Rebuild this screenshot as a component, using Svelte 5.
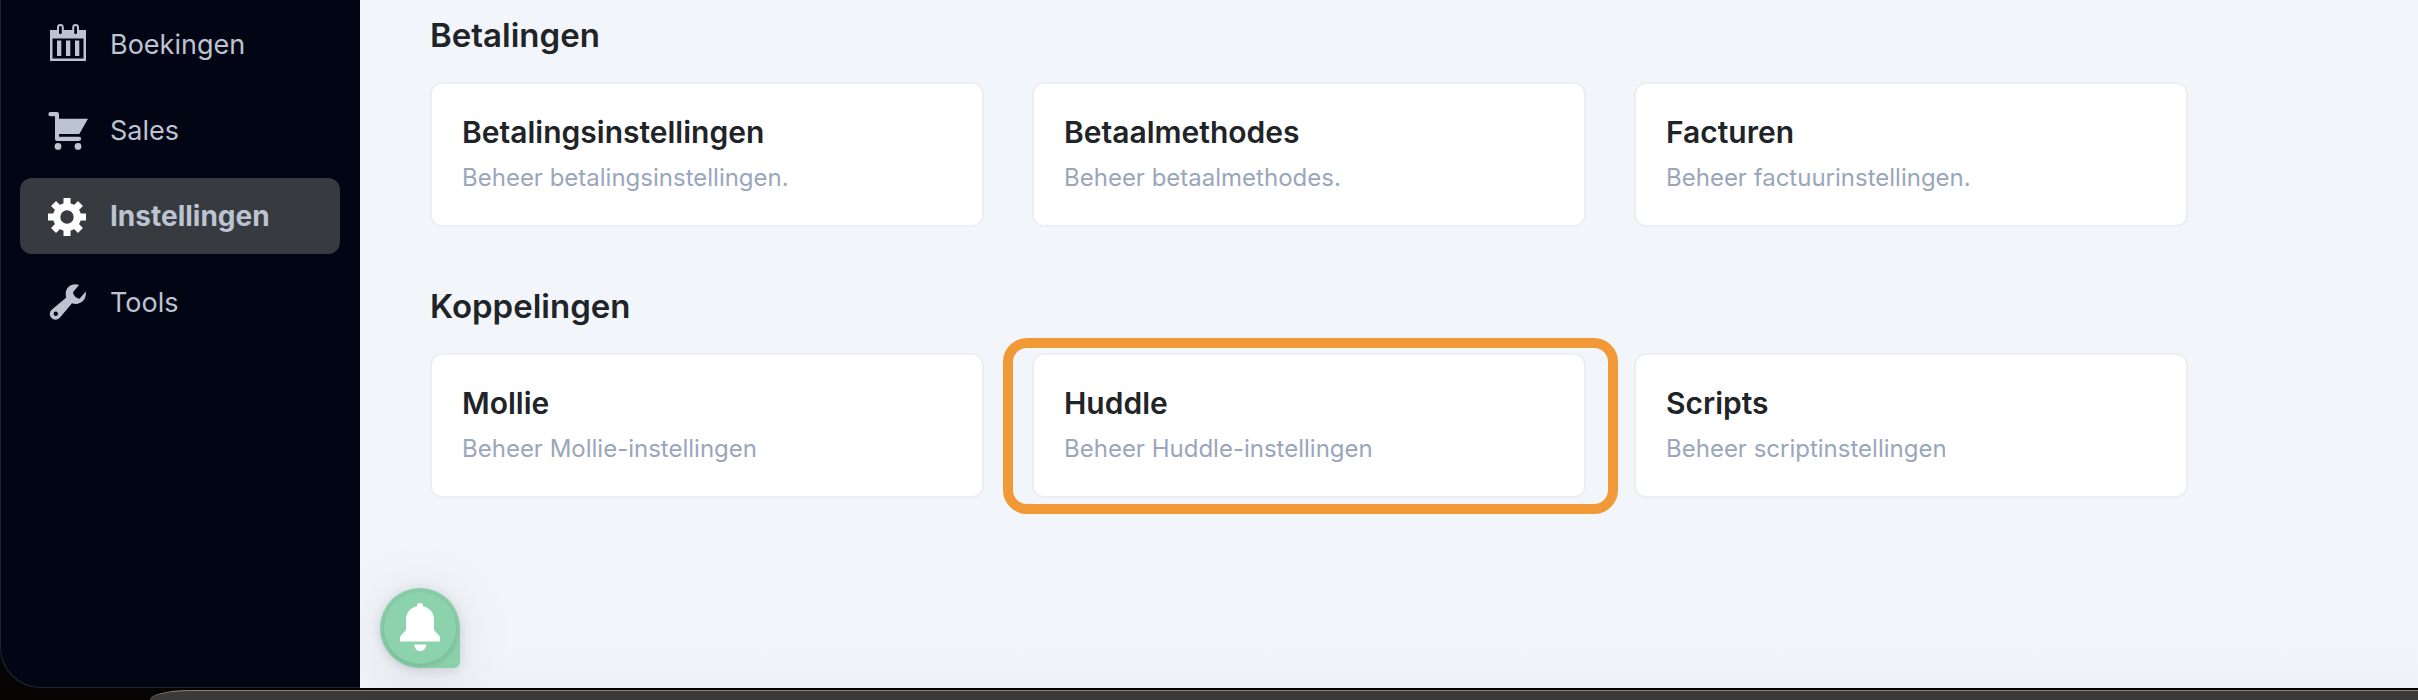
<script lang="ts">
  const nav = [
    { label: 'Boekingen', icon: 'calendar', active: false },
    { label: 'Sales', icon: 'cart', active: false },
    { label: 'Instellingen', icon: 'gear', active: true },
    { label: 'Tools', icon: 'wrench', active: false }
  ];

  const sections = [
    {
      title: 'Betalingen',
      cards: [
        { title: 'Betalingsinstellingen', text: 'Beheer betalingsinstellingen.', marked: false },
        { title: 'Betaalmethodes', text: 'Beheer betaalmethodes.', marked: false },
        { title: 'Facturen', text: 'Beheer factuurinstellingen.', marked: false }
      ]
    },
    {
      title: 'Koppelingen',
      cards: [
        { title: 'Mollie', text: 'Beheer Mollie-instellingen', marked: false },
        { title: 'Huddle', text: 'Beheer Huddle-instellingen', marked: true },
        { title: 'Scripts', text: 'Beheer scriptinstellingen', marked: false }
      ]
    }
  ];

  const teeth = [0, 45, 90, 135, 180, 225, 270, 315];
</script>

<div class="desktop">
  <div class="window">
    <nav class="sidebar" aria-label="Hoofdmenu">
      {#each nav as item}
        <a class="nav-item" class:active={item.active} href="#{item.label.toLowerCase()}">
          <svg class="nav-icon" viewBox="0 0 40 40" aria-hidden="true">
            {#if item.icon === 'calendar'}
              <path
                fill-rule="evenodd"
                d="M2 6h7V3.400a3.400 3.400 0 0 1 6.800 0V6h8.400V3.400a3.400 3.400 0 0 1 6.800 0V6h7v31H2zM4.500 14.500v20h31v-20zM11 3.500v5.300a1.400 1.400 0 0 0 2.800 0V3.500a1.400 1.400 0 0 0-2.800 0zM26.200 3.500v5.300a1.400 1.400 0 0 0 2.800 0V3.500a1.400 1.400 0 0 0-2.800 0z"
              />
              <path d="M9 16.500h4.300v15.500H9zM18 16.500h4.300v15.500H18zM27 16.500h4.300v15.500H27z" />
            {:else if item.icon === 'cart'}
              <path
                d="M2.500 2H9a2 2 0 0 1 2 2v4.700h29L31.300 24H11v2.700h20a2.100 2.100 0 0 1 0 4.300H9a2 2 0 0 1-2-2V6.300H2.500a2.100 2.100 0 0 1 0-4.300z"
              />
              <circle cx="10" cy="36.400" r="3.400" />
              <circle cx="30" cy="36.400" r="3.400" />
            {:else if item.icon === 'gear'}
              {#each teeth as angle}
                <rect x="15.500" y="2" width="7" height="9" transform="rotate({angle} 19 21)" />
              {/each}
              <path
                fill-rule="evenodd"
                d="M19 7a14 14 0 0 1 0 28a14 14 0 0 1 0-28zM19 14.300a6.700 6.700 0 0 0 0 13.400a6.700 6.700 0 0 0 0-13.400z"
              />
            {:else}
              <path
                fill-rule="evenodd"
                d="M31 3C24 .5 17.500 5.500 17.700 12c0 1.500.3 2.500.6 3.600L4 27.500a5.700 5.700 0 1 0 8 8L24 21.300c7.500 2.700 15-3 13.800-11.800l-6.300 7.300c-3-.4-6-2.800-6.500-6.500zM7.800 29.500a2.200 2.200 0 1 1 0 4.400a2.200 2.200 0 0 1 0-4.400z"
              />
            {/if}
          </svg>
          <span>{item.label}</span>
        </a>
      {/each}
    </nav>

    <main class="content">
      {#each sections as section}
        <section>
          <h2>{section.title}</h2>
          <div class="cards">
            {#each section.cards as card}
              <a class="card" class:marked={card.marked} href="#{card.title.toLowerCase()}">
                <h3>{card.title}</h3>
                <p>{card.text}</p>
              </a>
            {/each}
          </div>
        </section>
      {/each}

      <button class="bell" type="button" aria-label="Meldingen">
        <span class="bell-face">
          <svg viewBox="0 0 40 50" aria-hidden="true">
            <path
              d="M20 0a3 3 0 0 1 3 3.200C29.500 4.500 34 9.500 34 16.500v10.500l5 5.500a4 4 0 0 1 1 2.700V38.500H0v-3.300A4 4 0 0 1 1 32.500l5-5.500V16.500C6 9.500 10.500 4.500 17 3.200A3 3 0 0 1 20 0z"
            />
            <path d="M14 41.500h12.500a6.300 7.500 0 0 1-12.500 0z" />
          </svg>
        </span>
      </button>
    </main>
  </div>

  <!-- window lying behind, only its top edge shows -->
  <div class="behind"></div>
</div>

<style>
  :global(body) {
    background: #050403;
    font-family: Inter, 'Open Sans', sans-serif;
  }

  .desktop {
    display: flex;
    flex-direction: column;
    min-height: 100vh;
    overflow: hidden;
  }

  .window {
    flex: 1;
    display: flex;
  }

  .sidebar {
    position: relative;
    z-index: 1;
    box-sizing: border-box;
    width: 360px;
    flex-shrink: 0;
    display: flex;
    flex-direction: column;
    gap: 10px;
    padding: 6px 20px;
    background: #020514;
    border-bottom-left-radius: 40px;
    box-shadow: inset 1px -1px 0 #20222e;
  }

  .nav-item {
    display: flex;
    align-items: center;
    gap: 22px;
    height: 76px;
    padding-left: 28px;
    border-radius: 12px;
    color: #bcc3d1;
    font-size: 27px;
    text-decoration: none;
  }

  .nav-item.active {
    background: #373b3f;
    font-size: 28px;
    font-weight: 700;
  }

  .nav-icon {
    width: 40px;
    height: 40px;
    fill: #bcc3d1;
  }

  .active .nav-icon {
    fill: #fff;
  }

  .content {
    position: relative;
    flex: 1;
    padding: 11px 70px;
    background: linear-gradient(to top, #eef1f6, #f2f5fa 40px);
  }

  section {
    max-width: 1758px;
    margin-bottom: 55px;
  }

  h2 {
    margin: 0 0 23px;
    color: #1f2428;
    font-size: 33px;
    font-weight: 600;
    line-height: 48px;
  }

  .cards {
    display: grid;
    grid-template-columns: repeat(3, 1fr);
    gap: 48px;
  }

  .card {
    position: relative;
    box-sizing: border-box;
    padding: 28px 30px;
    background: #fff;
    border: 2px solid #eceef2;
    border-radius: 12px;
    color: #1f2428;
    text-decoration: none;
  }

  .marked::after {
    content: '';
    position: absolute;
    inset: -17px -34px -18px -31px;
    border: 10px solid #f09936;
    border-radius: 24px;
  }

  h3 {
    margin: 0 0 6px;
    font-size: 30px;
    font-weight: 600;
    line-height: 40px;
  }

  p {
    margin: 0;
    color: #9aa6bb;
    font-size: 24px;
    line-height: 39px;
  }

  .bell {
    position: absolute;
    left: 20px;
    bottom: 20px;
    width: 80px;
    height: 80px;
    padding: 4px;
    border: 0;
    border-radius: 40px 40px 6px 40px;
    background: #8ad0aa;
    box-shadow: 0 2px 12px rgb(0 0 0 / 12%), 0 4px 60px rgb(0 0 0 / 10%);
  }

  .bell-face {
    display: flex;
    align-items: center;
    justify-content: center;
    height: 72px;
    border-radius: 50%;
    background: #8cd3ad;
    box-shadow: 0 2px 6px rgb(0 0 0 / 14%);
  }

  .bell svg {
    width: 40px;
    height: 50px;
    fill: #fff;
  }

  .behind {
    height: 9px;
    margin: 2px 0 0 150px;
    background: #3a3a3a;
    border-top: 1px solid #8d857b;
    border-top-left-radius: 40px 10px;
  }
</style>
